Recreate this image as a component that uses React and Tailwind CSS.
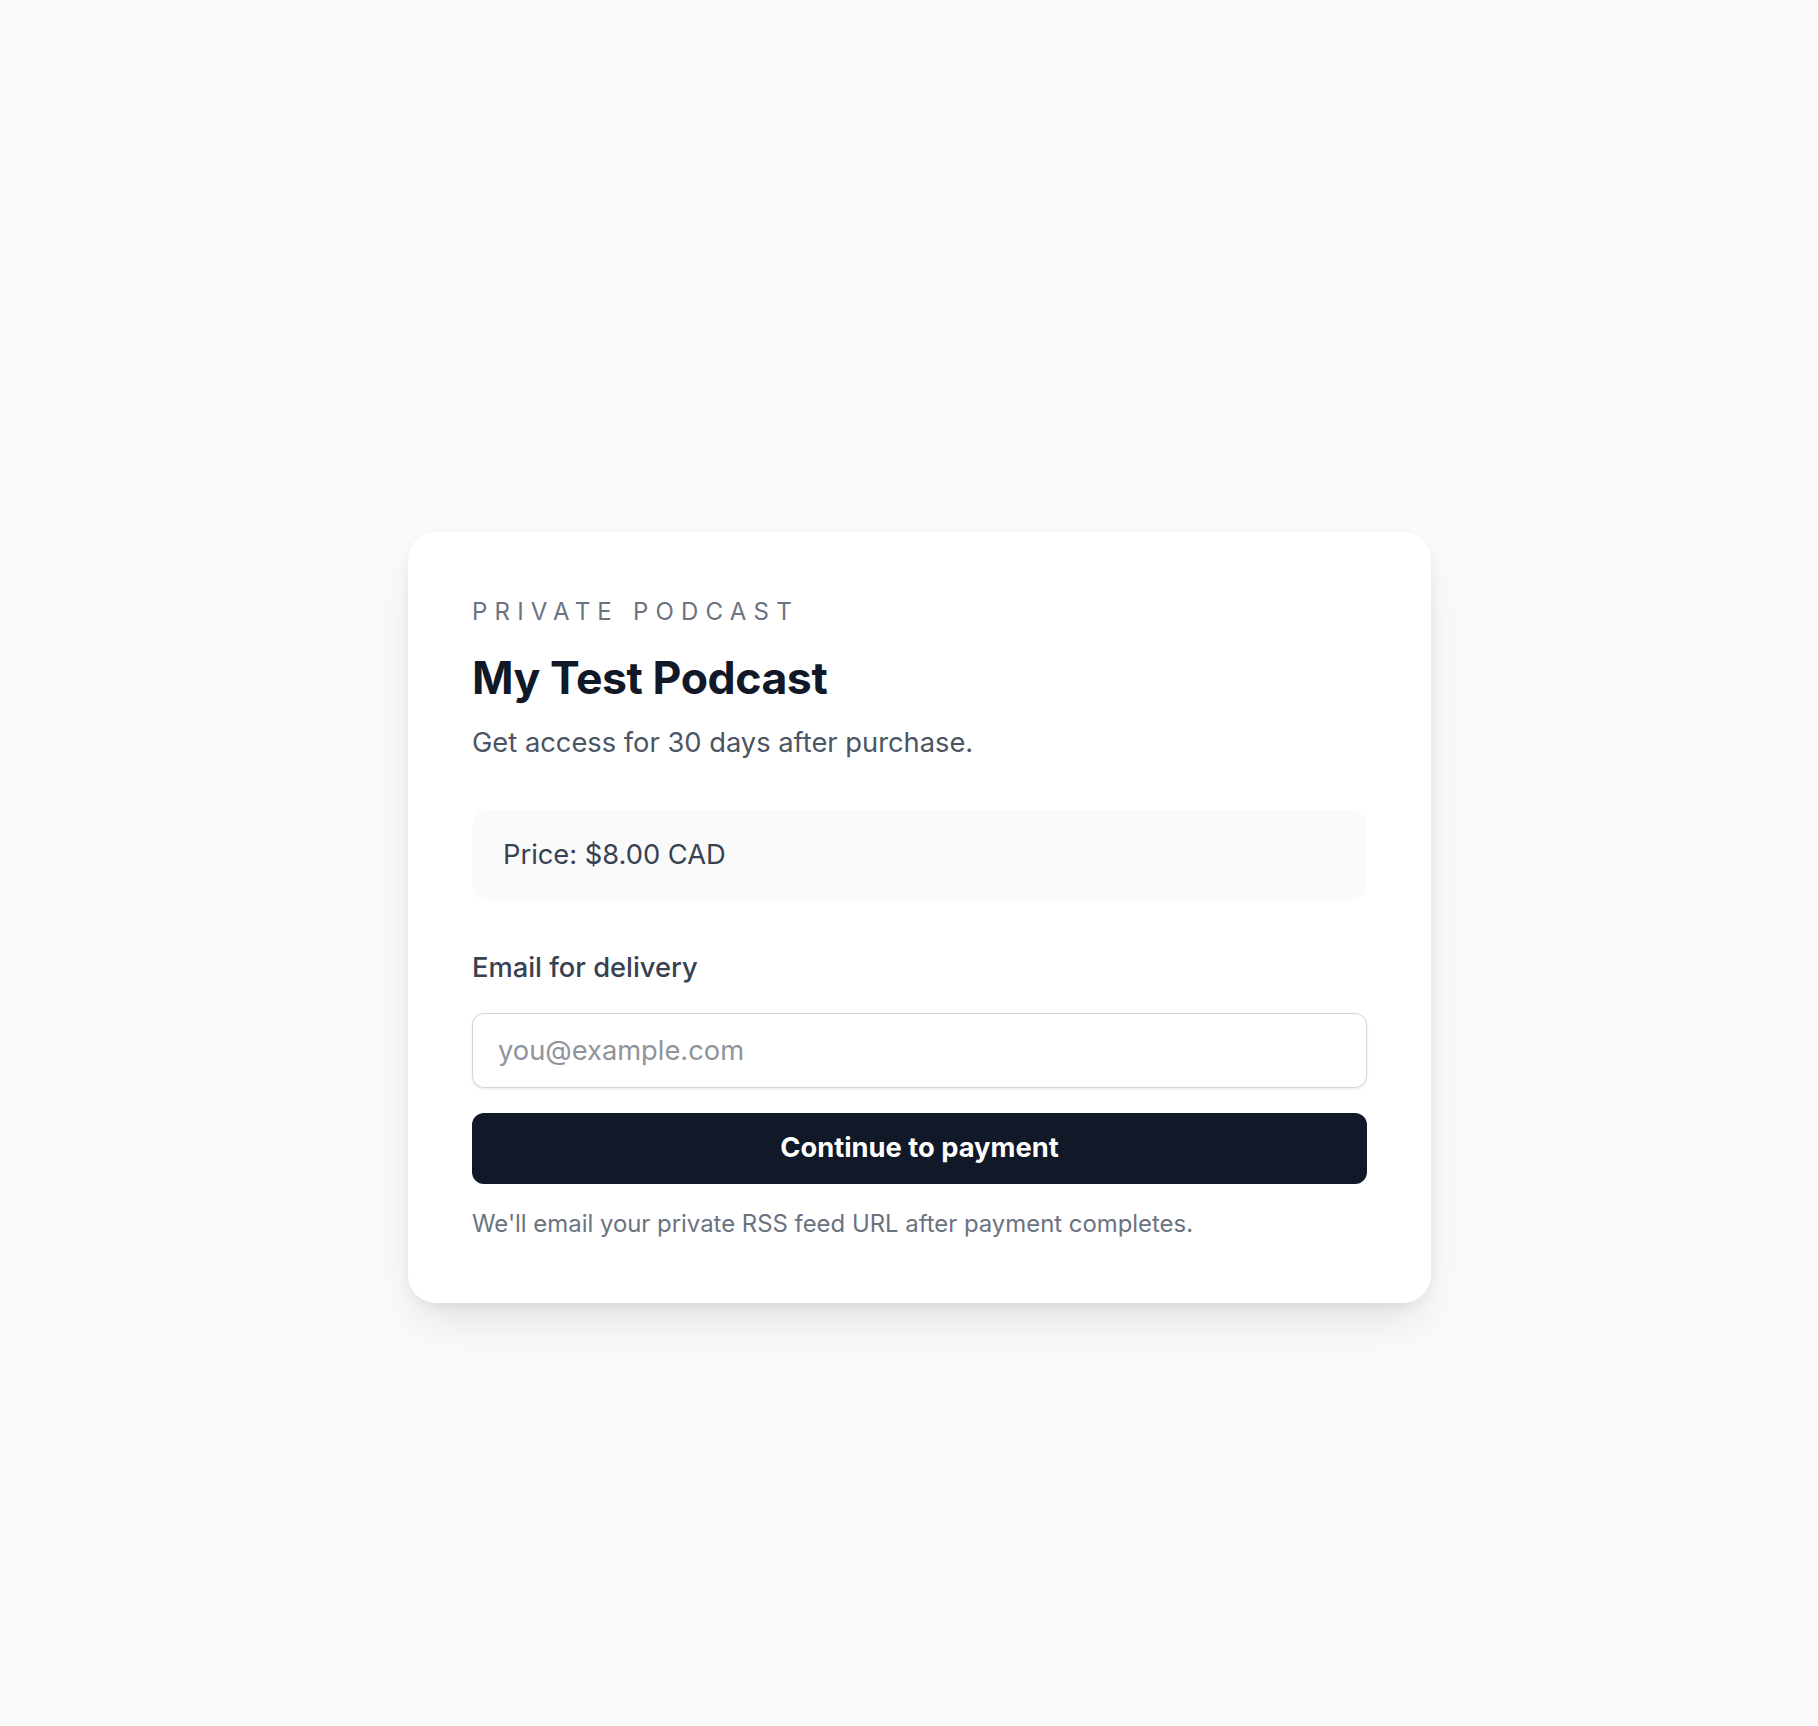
import { useState } from "react";

const Checkout = () => {
  const [email, setEmail] = useState("");

  return (
    <div className="w-[1023px] rounded-[28px] bg-white px-[64px] pt-[62px] pb-[61px] shadow-[0_24px_48px_-12px_rgba(0,0,0,0.12),0_4px_12px_rgba(0,0,0,0.05)]">
      <p className="text-[24px] leading-[36px] uppercase tracking-[0.3em] text-[#6b7280]">
        Private Podcast
      </p>
      <h1 className="mt-[20px] text-[44.6px] leading-[57px] font-bold tracking-[-0.01em] text-[#111827]">
        My Test Podcast
      </h1>
      <p className="mt-[15px] text-[27.3px] leading-[42.7px] text-[#4b5563]">
        Get access for 30 days after purchase.
      </p>

      {/* Price */}
      <div className="mt-[45px] rounded-[16px] bg-[#fafafa] px-[31px] py-[24px] text-[27.3px] leading-[42.7px] text-[#374151]">
        Price: $8.00 CAD
      </div>

      <form className="mt-[48px] flex flex-col" onSubmit={(e) => e.preventDefault()}>
        <label htmlFor="email" className="text-[27.3px] leading-[40px] font-medium text-[#374151]">
          Email for delivery
        </label>
        <input
          id="email"
          type="email"
          value={email}
          onChange={(e) => setEmail(e.target.value)}
          placeholder="you@example.com"
          className="mt-[25px] h-[75px] rounded-[12px] border-[1.5px] border-[#d1d5db] bg-white px-[25px] text-[27.3px] text-[#111827] shadow-[0_1px_3px_rgba(0,0,0,0.1)] outline-none placeholder:text-[#8f949c]"
        />
        <button
          type="submit"
          className="mt-[25px] h-[71px] rounded-[12px] bg-[#111827] text-[27.3px] font-bold text-white"
        >
          Continue to payment
        </button>
      </form>

      <p className="mt-[22px] text-[23.9px] leading-[35.6px] text-[#6b7280]">
        We'll email your private RSS feed URL after payment completes.
      </p>
    </div>
  );
};

export default function App() {
  return (
    <div className="min-h-[1726px] bg-[#fafafa] flex justify-center items-start pt-[532px] pl-[21px] font-['Inter',sans-serif]">
      <Checkout />
    </div>
  );
}
